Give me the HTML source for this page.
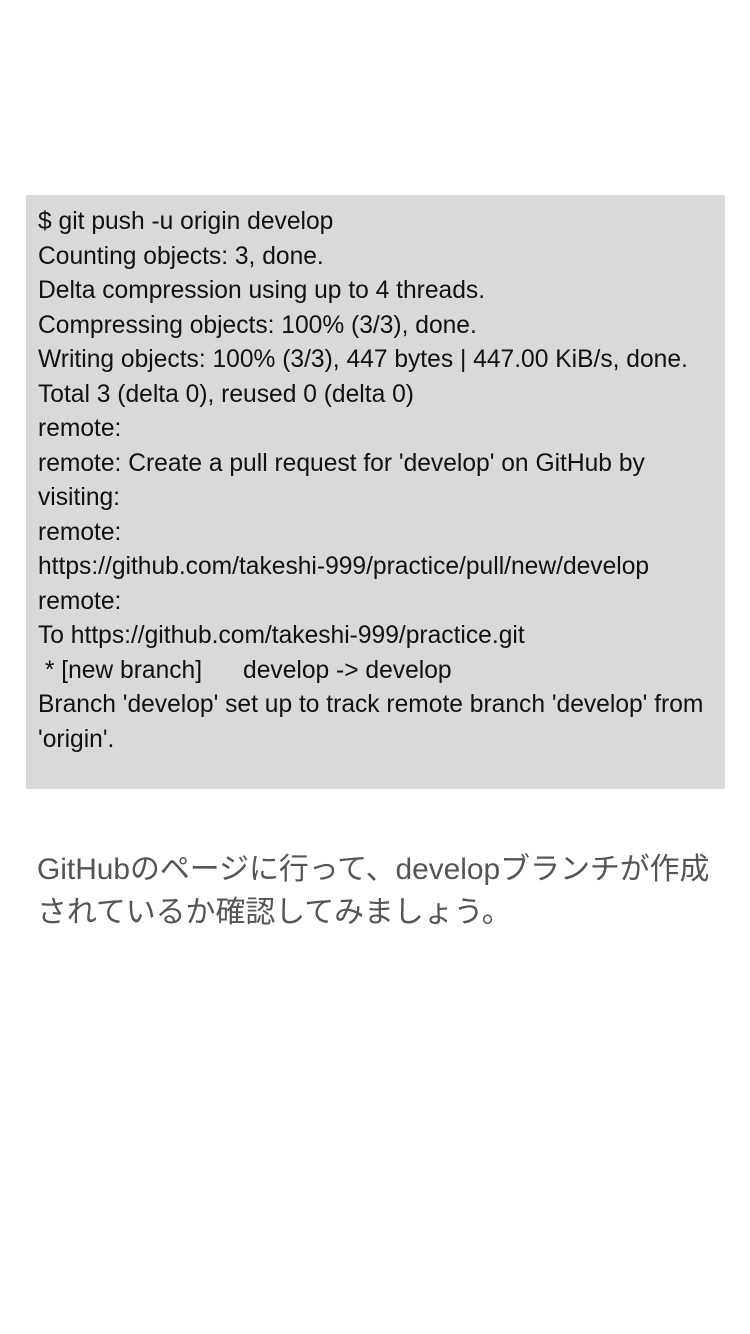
<!DOCTYPE html>
<html><head><meta charset="utf-8"><style>
body{margin:0;width:750px;height:1334px;background:#fff;overflow:hidden}
.box{position:absolute;left:26px;top:195px;width:699px;height:594px;background:#d9d9d9}
.code{position:absolute;left:38px;top:205px;font:24.6px/34.5px "Liberation Sans",sans-serif;color:#111;white-space:pre}
.jp{position:absolute;left:37px;top:848px;font:29.9px/43px "Liberation Sans","Noto Sans CJK JP",sans-serif;color:#555;white-space:pre}
</style></head><body>
<div class="box"></div>
<div class="code">$ git push -u origin develop
Counting objects: 3, done.
Delta compression using up to 4 threads.
Compressing objects: 100% (3/3), done.
Writing objects: 100% (3/3), 447 bytes | 447.00 KiB/s, done.
Total 3 (delta 0), reused 0 (delta 0)
remote:
remote: Create a pull request for 'develop' on GitHub by
visiting:
remote:
https://github.com/takeshi-999/practice/pull/new/develop
remote:
To https://github.com/takeshi-999/practice.git
 * [new branch]      develop -&gt; develop
Branch 'develop' set up to track remote branch 'develop' from
'origin'.</div>
<div class="jp">GitHubのページに行って、developブランチが作成
されているか確認してみましょう。</div>
</body></html>
